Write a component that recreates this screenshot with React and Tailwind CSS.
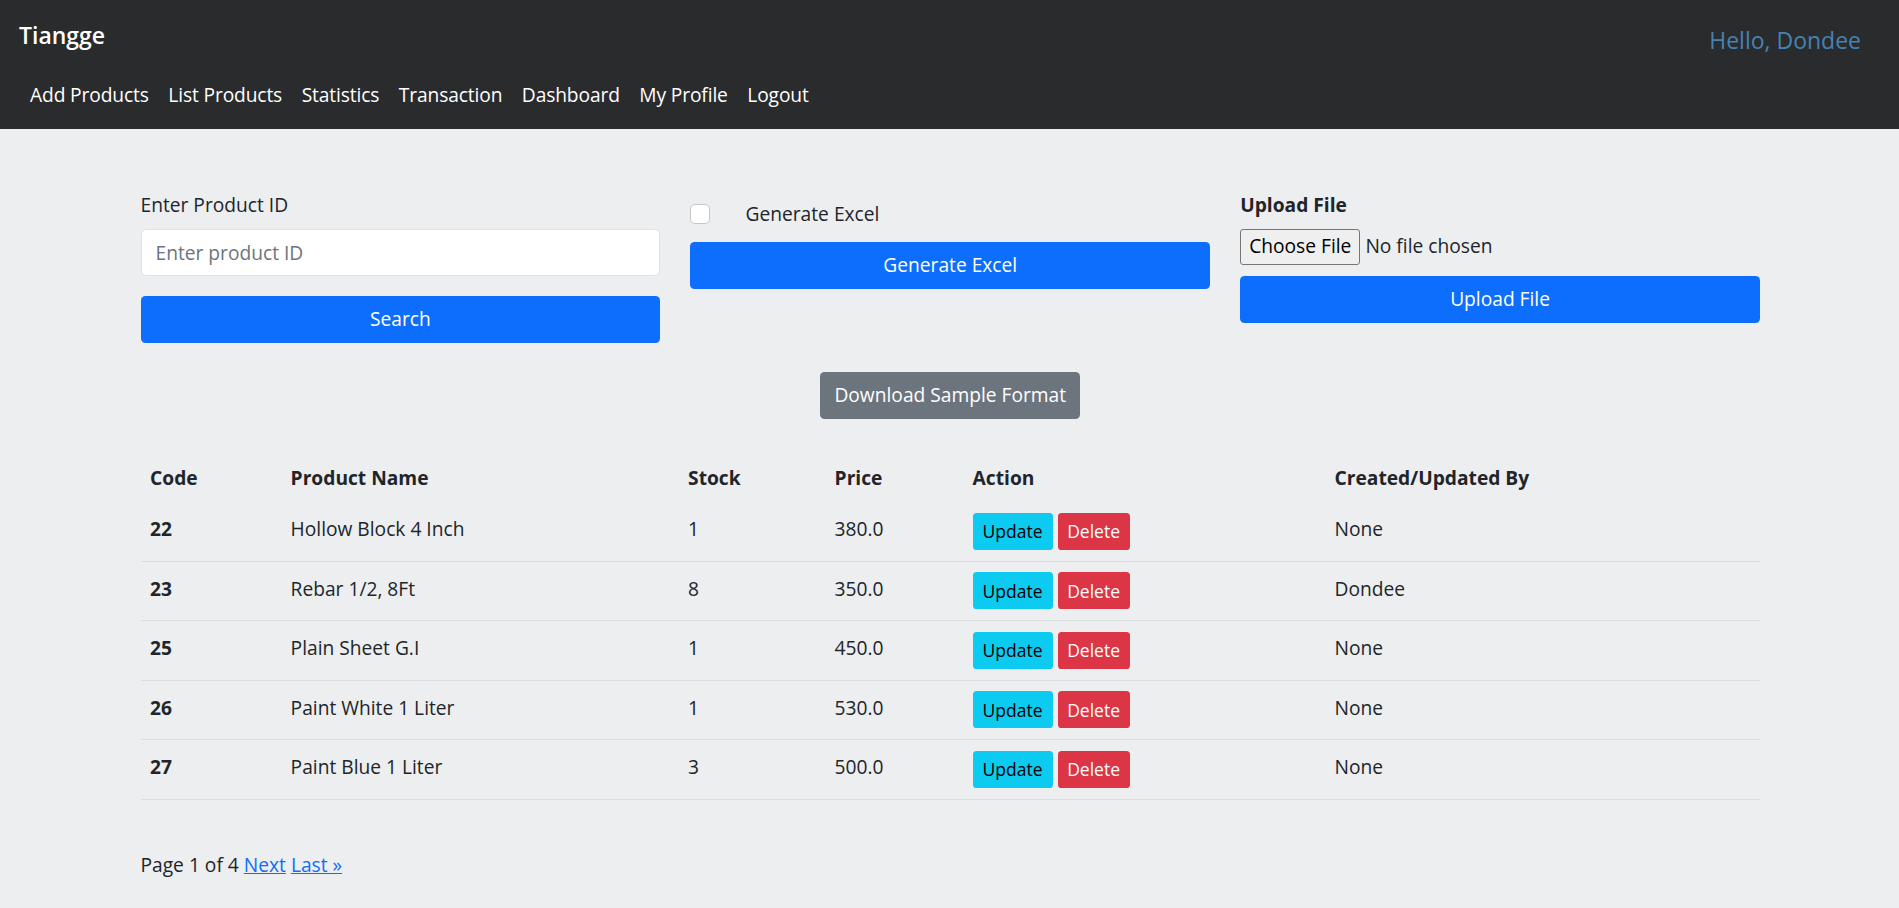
import React from 'react'

const navLinks = ['Add Products', 'List Products', 'Statistics', 'Transaction', 'Dashboard', 'My Profile', 'Logout']

const products = [
  { code: 22, name: 'Hollow Block 4 Inch', stock: 1, price: '380.0', by: 'None' },
  { code: 23, name: 'Rebar 1/2, 8Ft', stock: 8, price: '350.0', by: 'Dondee' },
  { code: 25, name: 'Plain Sheet G.I', stock: 1, price: '450.0', by: 'None' },
  { code: 26, name: 'Paint White 1 Liter', stock: 1, price: '530.0', by: 'None' },
  { code: 27, name: 'Paint Blue 1 Liter', stock: 3, price: '500.0', by: 'None' }
]

const cols = 'grid grid-cols-[140.5px_397.5px_146.5px_138px_362px_1fr]'

export default function App() {
  return (
    <div
      className="min-h-screen bg-[#eceef0] text-[#212529] text-[19.2px] leading-[1.5]"
      style={{ fontFamily: '"Open Sans", "Noto Sans", sans-serif' }}
    >
      {/* Navbar */}
      <nav className="h-[129px] bg-[#2a2b2d] px-[19px]">
        <div className="flex items-start justify-between pt-[20px]">
          <span className="text-white text-[23px] font-semibold leading-[30px]">Tiangge</span>
          <span className="text-[#4682b4] text-[23px] leading-[30px] mt-[5px] mr-[19px]">Hello, Dondee</span>
        </div>
        <div className="flex gap-[19.5px] mt-[25px] pl-[11px] tracking-[-0.12px]">
          {navLinks.map(l => (
            <a key={l} className="text-white leading-[29px] cursor-pointer">{l}</a>
          ))}
        </div>
      </nav>

      <div className="w-[1619.5px] ml-[140.5px] pt-[61px]">

        {/* Forms */}
        <div className="grid grid-cols-3 gap-[30px]">
          <div>
            <label className="block leading-[29px]">Enter Product ID</label>
            <input
              type="text"
              placeholder="Enter product ID"
              className="mt-[9.5px] w-full h-[47px] bg-white border border-[#dee2e6] rounded-[4.5px] px-[14px] placeholder:text-[#6c757d] focus:outline-none"
            />
            <button className="mt-[20.5px] w-full h-[47px] bg-[#0d6efd] text-white rounded-[4.5px]">Search</button>
          </div>

          <div>
            <div className="flex items-center h-[29px] mt-[9.5px]">
              <span className="w-[19.2px] h-[19.2px] bg-white border border-[#c4c6c9] rounded-[4.8px]"></span>
              <span className="ml-[36px]">Generate Excel</span>
            </div>
            <button className="mt-[13px] w-full h-[47px] bg-[#0d6efd] text-white rounded-[4.5px]">Generate Excel</button>
          </div>

          <div>
            <label className="block font-bold leading-[29px]">Upload File</label>
            <div className="flex items-center mt-[9.5px] h-[36px]">
              <span className="h-[36px] px-[8px] flex items-center bg-[#efefef] border border-[#767676] rounded-[3px] text-black">Choose File</span>
              <span className="ml-[5px]">No file chosen</span>
            </div>
            <button className="mt-[11px] w-full h-[47px] bg-[#0d6efd] text-white rounded-[4.5px]">Upload File</button>
          </div>
        </div>

        {/* Download sample */}
        <div className="flex justify-center mt-[29px]">
          <button className="w-[260px] h-[47px] bg-[#6c757d] text-white rounded-[4.5px]">Download Sample Format</button>
        </div>

        {/* Table */}
        <div className="mt-[35px]">
          <div className={`${cols} h-[48px] items-center font-bold`}>
            <div className="px-[9.6px]">Code</div>
            <div className="px-[9.6px]">Product Name</div>
            <div className="px-[9.6px]">Stock</div>
            <div className="px-[9.6px]">Price</div>
            <div className="px-[9.6px]">Action</div>
            <div className="px-[9.6px]">Created/Updated By</div>
          </div>
          {products.map(p => (
            <div key={p.code} className={`${cols} h-[59.5px] items-center border-b border-[#dadcdf]`}>
              <div className="px-[9.6px] font-bold pb-[3px]">{p.code}</div>
              <div className="px-[9.6px] pb-[3px]">{p.name}</div>
              <div className="px-[9.6px] pb-[3px]">{p.stock}</div>
              <div className="px-[9.6px] pb-[3px]">{p.price}</div>
              <div className="px-[9.6px] flex gap-[5px]">
                <button className="w-[80px] h-[37px] bg-[#0dcaf0] text-black text-[17.5px] rounded-[3.6px]">Update</button>
                <button className="w-[72px] h-[37px] bg-[#dc3545] text-white text-[17.5px] rounded-[3.6px]">Delete</button>
              </div>
              <div className="px-[9.6px] pb-[3px]">{p.by}</div>
            </div>
          ))}
        </div>

        {/* Pagination */}
        <div className="mt-[50px] leading-[29px]">
          Page 1 of 4 <a className="text-[#0d6efd] underline cursor-pointer">Next</a>{' '}
          <a className="text-[#0d6efd] underline cursor-pointer">Last »</a>
        </div>
      </div>
    </div>
  )
}
